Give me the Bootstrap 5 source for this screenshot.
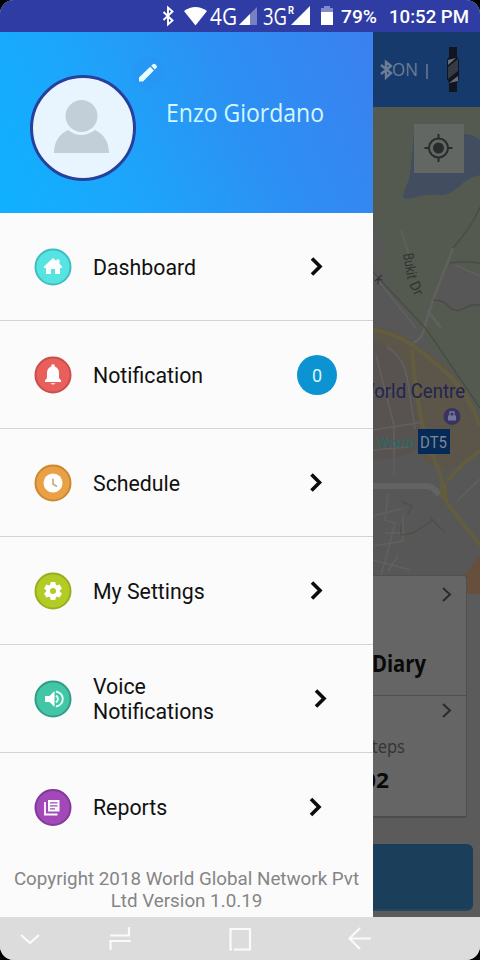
<!DOCTYPE html>
<html lang="en">
<head>
<meta charset="utf-8">
<meta name="viewport" content="width=device-width, initial-scale=1">
<title>Menu</title>
<link href="https://cdn.jsdelivr.net/npm/bootstrap@5.3.0/dist/css/bootstrap.min.css" rel="stylesheet">
<style>
html,body{height:960px;overflow:hidden;background:#000}
body{font-family:Roboto,sans-serif;color:#111}
svg{display:block;flex:none}
.phone{width:480px;height:960px;border-radius:14px;background:#dcdcdc}
.statusbar{height:32px;background:#2f3ca3}
.stage{height:885px}
.drawer{width:373px;background:#fbfbfb}
.profile{height:181px;background:linear-gradient(65deg,#10b1ff 0%,#1ca6fb 30%,#2d8ff3 65%,#3b80ee 100%)}
.avatar{width:106px;height:106px;margin:43px 0 0 30px;border:3px solid #26409b;background:#e9f5fe}
.pencil{margin:25px 0 0 -4px;width:32px;height:32px;background:#2b91f166}
.entry{height:108px;border:0;border-bottom:1px solid #d3d3d3;background:transparent;padding:1px 0 0 34px;font-size:21.3px;line-height:25px;color:#111}
.entry:last-child{border-bottom:0}
.entry .caption{width:183px;margin-left:21px}
.counter{width:40px;height:40px;margin-left:21px;background:#0c94d2;color:#d9f7ff;font-size:18px}
.legal{font-size:18.8px;line-height:22px;color:#858585;padding-top:7px}
.behind{width:107px;background:#5b5b5b}
.tophead{height:75px;background:#173a6c}
.tiles{width:94px;height:243px;margin-top:-19px;background:#656565;border:1px solid #505050;border-left:0;border-bottom:2px solid #4c4c4c;border-radius:0 3px 3px 0;position:relative}
.cta{width:100px;height:67px;margin-top:26px;background:#1b3e5a;border-radius:0 6px 6px 0;border-bottom:2px solid #26465d}
.sysnav{height:43px;background:#dcdcdc}
</style>
<script src="https://cdn.jsdelivr.net/npm/bootstrap@5.3.0/dist/js/bootstrap.bundle.min.js"></script>
</head>
<body class="m-0">
<div class="phone d-flex flex-column overflow-hidden">
  <header class="statusbar">
    <svg width="480" height="32" fill="#fff" font-family="Roboto,sans-serif">
      <path d="M163.500 12l9 8.500-4.500 4V7.500l4.500 4-9 8.500" fill="none" stroke="#fff" stroke-width="1.900"/>
      <path d="M184 11q11.500-8 23 0L195.500 25.500z"/>
      <text x="210" y="25" font-family="Open Sans,sans-serif" font-size="24" textLength="27" lengthAdjust="spacingAndGlyphs">4G</text>
      <path d="M239 25L257 7v18z" opacity=".35"/><path d="M239 25L250 14v11z"/>
      <text x="263" y="25" font-family="Open Sans,sans-serif" font-size="24" textLength="24" lengthAdjust="spacingAndGlyphs">3G</text>
      <text x="288" y="14" font-size="10" font-weight="700" textLength="6" lengthAdjust="spacingAndGlyphs">R</text>
      <path d="M291 25L310 6v19z"/>
      <path d="M321 8h3V6h6v2h3v4h-12z" opacity=".4"/><path d="M321 12h12v13h-12z"/>
      <text x="341" y="23" font-size="18.500" font-weight="500" textLength="36" lengthAdjust="spacingAndGlyphs">79%</text>
      <text x="389" y="23" font-size="18.500" font-weight="500" textLength="80" lengthAdjust="spacingAndGlyphs">10:52 PM</text>
    </svg>
  </header>

  <main class="stage d-flex">
    <aside class="drawer d-flex flex-column">
      <div class="profile d-flex align-items-start">
        <div class="avatar rounded-circle d-flex justify-content-center">
          <svg width="100" height="100" fill="#c3cfd8"><circle cx="48.500" cy="38" r="16"/><path d="M21 75c0-11 5-19 14-23q13 10 27 0c9 4 14 12 14 23z"/></svg>
        </div>
        <div class="pencil rounded-circle">
          <svg width="32" height="32" fill="#e9ffff"><path d="M7 20.500L18.200 9.800l3.600 3.600L11 24.500H7zM19.200 8.800l1.700-1.600q1.200-1 2.400.1l1.200 1.200q1.100 1.200 0 2.300l-1.700 1.600z"/></svg>
        </div>
        <svg class="mt-5" width="180" height="60" fill="#d4f7ff"><text x="2" y="42" font-family="Open Sans,sans-serif" font-size="26" textLength="158" lengthAdjust="spacingAndGlyphs">Enzo Giordano</text></svg>
      </div>

      <nav class="list-group list-group-flush">
        <a class="entry d-flex align-items-center text-decoration-none" href="#">
          <svg width="38" height="38"><circle cx="19" cy="19" r="17.500" fill="#55e4e2" stroke="#3fbec0" stroke-width="2"/><path d="M9.500 19L19 10l3.500 3v-1.500h3v4.200l3 3.300-1.500 1H26v6h-5v-5h-4v5h-5v-6h-1.500z" fill="#fff"/></svg>
          <span class="caption">Dashboard</span>
          <svg width="50" height="30" fill="none" stroke="#0c0c0c" stroke-width="3.600"><path d="M36 6.500l8 8-8 8"/></svg>
        </a>
        <a class="entry d-flex align-items-center text-decoration-none" href="#">
          <svg width="38" height="38"><circle cx="19" cy="19" r="17.500" fill="#e95f5b" stroke="#c94e4d" stroke-width="2"/><path d="M11 26v-1.500l2-2.500v-5q0-5 4.300-6.500V9q1.700-1.500 3.400 0v1.500Q25 12 25 17v5l2 2.500V26zM16.500 27.200h5q-2.500 2.800-5 0z" fill="#fff"/></svg>
          <span class="caption">Notification</span>
          <span class="counter rounded-circle d-flex align-items-center justify-content-center">0</span>
        </a>
        <a class="entry d-flex align-items-center text-decoration-none" href="#">
          <svg width="38" height="38"><circle cx="19" cy="19" r="17.500" fill="#eaa044" stroke="#cd8733" stroke-width="2"/><circle cx="19" cy="19" r="9.500" fill="#fff"/><path d="M19 14.500V20l4 2.500" fill="none" stroke="#c9a878" stroke-width="1.600"/></svg>
          <span class="caption">Schedule</span>
          <svg width="50" height="30" fill="none" stroke="#0c0c0c" stroke-width="3.600"><path d="M35.500 6.500l8 8-8 8"/></svg>
        </a>
        <a class="entry d-flex align-items-center text-decoration-none" href="#">
          <svg width="38" height="38"><circle cx="19" cy="19" r="17.500" fill="#b4cb25" stroke="#98ae20" stroke-width="2"/><g fill="#fff"><circle cx="19" cy="19" r="6.800"/><path d="M16.700 10h4.600l.8 4h-6.200zM16.700 28h4.600l.8-4h-6.200z"/><path transform="rotate(60 19 19)" d="M16.700 10h4.600l.8 4h-6.200zM16.700 28h4.600l.8-4h-6.200z"/><path transform="rotate(120 19 19)" d="M16.700 10h4.600l.8 4h-6.200zM16.700 28h4.600l.8-4h-6.200z"/></g><circle cx="19" cy="19" r="3" fill="#b4cb25"/></svg>
          <span class="caption">My Settings</span>
          <svg width="50" height="30" fill="none" stroke="#0c0c0c" stroke-width="3.600"><path d="M36 6.500l8 8-8 8"/></svg>
        </a>
        <a class="entry d-flex align-items-center text-decoration-none" href="#">
          <svg width="38" height="38"><circle cx="19" cy="19" r="17.500" fill="#43c6a6" stroke="#329d86" stroke-width="2"/><path d="M11 16h4.500l5-5v16l-5-5H11z" fill="#fff"/><path d="M22 15.500q4 3.500 0 7M22 11.500c9 2 9 13 0 15" fill="none" stroke="#e4fff8" stroke-width="1.900"/></svg>
          <span class="caption">Voice<br>Notifications</span>
          <svg width="54" height="30" fill="none" stroke="#0c0c0c" stroke-width="3.600"><path d="M40 6.500l8 8-8 8"/></svg>
        </a>
        <a class="entry d-flex align-items-center text-decoration-none" href="#">
          <svg width="38" height="38"><circle cx="19" cy="18.500" r="17.500" fill="#a348b8" stroke="#823998" stroke-width="2"/><path d="M14 11h11.500v11.500H14z" fill="#fff"/><path d="M11 13v12.500h12.500" fill="none" stroke="#fff" stroke-width="1.800"/><path d="M16 13.800h7.500M16 16.800h7.500M16 19.800h5" stroke="#a348b8" stroke-width="1.300"/></svg>
          <span class="caption">Reports</span>
          <svg width="50" height="30" fill="none" stroke="#0c0c0c" stroke-width="3.600"><path d="M35 6l8 8-8 8"/></svg>
        </a>
      </nav>
      <footer class="legal text-center">Copyright 2018 World Global Network Pvt<br>Ltd Version 1.0.19</footer>
    </aside>

    <section class="behind overflow-hidden">
      <div class="tophead">
        <svg width="107" height="75" font-family="Open Sans,sans-serif">
          <path d="M8 33l10 8-5 4.500V30l5 4-10 8" fill="none" stroke="#6c7d94" stroke-width="2.400"/>
          <text x="19" y="44" fill="#6c7d94" font-size="19" textLength="26" lengthAdjust="spacingAndGlyphs">ON</text>
          <path d="M54 32v15" stroke="#6c7d94" stroke-width="1.500"/>
          <path d="M76 15h8v10l2 3v19l-2 4v9h-8v-9l-2-4V28l2-3z" fill="#11151f"/>
          <path d="M75 35l10-8v12L75 47z" fill="#353a43"/><path d="M75 28l8-2-8 7zM85 49l-9 2 9-7z" fill="#6a6e79"/>
        </svg>
      </div>
      <!-- street map, dimmed under the open drawer -->
      <svg width="107" height="487" viewBox="373 107 107 487" font-family="Roboto,sans-serif">
        <path fill="#545a50" d="M373 107h107v487H373z"/>
        <path fill="#575757" d="M373 260l43 64 64 90v180H373zM450 264l30 10v31l-22 6-25-11zM373 215l12 40-12 20z"/>
        <path fill="#424e5f" d="M414 134h51q8 0 15 6v35q-14 4-20 11-8 7-16 9-14-1-24 1-12 4-17 2 0-5 4-14 4-8 4-20z"/>
        <path fill="#5b5649" d="M373 326q30 4 50 24 28 14 44 44l13 25v30l-33 22-24-10q-10-40-18-60-12-34-32-55z"/>
        <path fill="#585350" d="M373 340q25 10 37 40l13 65q-20 16-50 14z"/>
        <g fill="none" stroke="#60615f" stroke-width="2.500">
          <path d="M453 248l-20 52-8 25q-2 14-12 18M428 311l13 17"/>
          <g stroke-width="1.500"><path d="M401 230l7 21v20M373 274l43 54M455 265l25 11M387 347q16 10 20 30l8 52M376 355l18 70v50M373 395l25-5M373 430l50-8M373 450l35-3"/>
          <path d="M373 516l28-7M388 494l-3 26 10 3-6 24-8 28M403 515v26l-30 5M373 560l37 10M385 533h21M398 556l-10 15M457 501l23-22"/></g>
          <path d="M373 486h52q9 0 14 9" stroke="#636363" stroke-width="6"/>
        </g>
        <g fill="none" stroke="#484c46" stroke-width="1.400"><path d="M480 207q-8 20-27 41M450 263q13-2 30 0M433 300q12 0 17 8 7 5 15 0 6-4 15-3M373 272l54 58 53 78"/></g>
        <g fill="none" stroke="#504e48" stroke-width="1.400"><path d="M401 501l11 5-4 8M401 525v10l12-2 20-13M430 517l15 16"/></g>
        <g fill="none" stroke="#635d3f" stroke-width="4"><path d="M373 330q25 3 50 23l28 24q18 19 29 49M412 350q2 25 6 50 4 28 10 48 12 20 15 38l4 17 33 42M480 451q-18 12-33 30"/><path d="M443 483l1 15" stroke-width="7"/></g>
        <path fill="#66503b" d="M480 555l-9 12-6 8 3 19h12z"/>
        <path fill="#626763" d="M414 124h50v49h-50z"/>
        <g fill="none" stroke="#282c2b" stroke-width="2"><circle cx="438.500" cy="148" r="9.500"/><path d="M438.500 134v5M438.500 157v5M424.500 148h5M447.500 148h5"/></g><circle cx="438.500" cy="148" r="5.500" fill="#282c2b"/>
        <g font-size="14.500" fill="#30342f"><text transform="translate(403 254) rotate(80)" textLength="26" lengthAdjust="spacingAndGlyphs">Bukit</text><text transform="translate(409 284) rotate(65)" textLength="14" lengthAdjust="spacingAndGlyphs">Dr</text></g>
        <text transform="translate(374 280) rotate(50)" font-size="12" fill="#303030">k</text>
        <text x="358" y="398" font-size="20" fill="#23254e" textLength="107" lengthAdjust="spacingAndGlyphs">World Centre</text>
        <circle cx="452" cy="416.500" r="8.500" fill="#393364"/><path d="M448 415.500h8v5h-8z" fill="#77759a"/><path d="M450 416v-4h4v4" fill="none" stroke="#77759a" stroke-width="1.400"/>
        <text x="377" y="448" font-size="15.500" fill="#2b6865" textLength="37" lengthAdjust="spacingAndGlyphs">World</text>
        <path fill="#062a57" d="M418 429h32v25h-32z"/>
        <text x="420" y="448" font-size="17" fill="#7e8792" textLength="27" lengthAdjust="spacingAndGlyphs">DT5</text>
      </svg>
      <div class="tiles">
        <svg width="94" height="240" viewBox="373 576 94 240" font-family="Open Sans,sans-serif">
          <g fill="none" stroke="#2b2b2b" stroke-width="2"><path d="M443 588l7 6.500-7 6.500M443 704l7 6.500-7 6.500"/></g>
          <path d="M373 695.500h94" stroke="#505050"/>
          <text x="372" y="672" font-size="22.500" font-weight="700" fill="#090909" textLength="54" lengthAdjust="spacingAndGlyphs">Diary</text>
          <text x="364" y="753" font-size="18" fill="#343434" textLength="41" lengthAdjust="spacingAndGlyphs">steps</text>
          <text x="363" y="788" font-size="22" font-weight="700" fill="#090909" textLength="26" lengthAdjust="spacingAndGlyphs">02</text>
        </svg>
      </div>
      <div class="cta"></div>
    </section>
  </main>

  <footer class="sysnav">
    <svg width="480" height="43" viewBox="0 917 480 43" fill="none" stroke="#fafafa" stroke-width="2.200"><path d="M21 935l9 8 9-8M110 935.500h19V927M131 941h-20.500v9M232 949.500h-1.500V929H250v20.500h-16M371 938.500h-21M360 928l-10.500 10.500L360 949"/></svg>
  </footer>
</div>
</body>
</html>
